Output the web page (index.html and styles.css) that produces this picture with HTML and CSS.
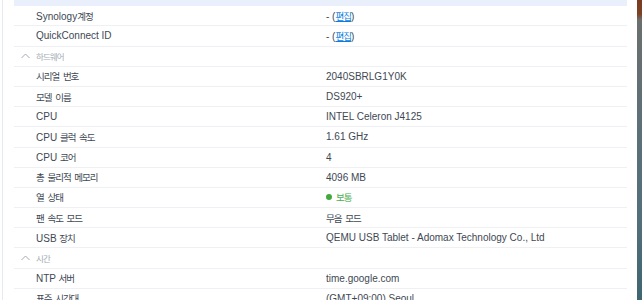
FILE: index.html
```html
<!DOCTYPE html>
<html lang="ko">
<head>
    <meta charset="UTF-8">
    <meta name="viewport" content="width=device-width, initial-scale=1.0">
    <title>정보 센터</title>
    <link rel="stylesheet" href="styles.css">
</head>
<body>
    <div class="screen">
        <div class="window">
            <div class="panel">
                <div class="info-list">
                    <div class="row selected">
                        <div class="label"></div>
                        <div class="value"></div>
                    </div>
                    <div class="row">
                        <div class="label">Synology<span class="ko">계정</span></div>
                        <div class="value">- (<a href="#" class="ko">편집</a>)</div>
                    </div>
                    <div class="row">
                        <div class="label">QuickConnect ID</div>
                        <div class="value">- (<a href="#" class="ko">편집</a>)</div>
                    </div>

                    <div class="row section">
                        <svg class="chevron" width="9" height="6" viewBox="0 0 9 6"><polyline points="0.5,5 4.5,1 8.5,5" fill="none" stroke="#a3abb3" stroke-width="1"/></svg>
                        <span class="ko">하드웨어</span>
                    </div>
                    <div class="row">
                        <div class="label ko">시리얼 번호</div>
                        <div class="value">2040SBRLG1Y0K</div>
                    </div>
                    <div class="row">
                        <div class="label ko">모델 이름</div>
                        <div class="value">DS920+</div>
                    </div>
                    <div class="row">
                        <div class="label">CPU</div>
                        <div class="value">INTEL Celeron J4125</div>
                    </div>
                    <div class="row">
                        <div class="label">CPU <span class="ko">클럭 속도</span></div>
                        <div class="value">1.61 GHz</div>
                    </div>
                    <div class="row">
                        <div class="label">CPU <span class="ko">코어</span></div>
                        <div class="value">4</div>
                    </div>
                    <div class="row">
                        <div class="label ko">총 물리적 메모리</div>
                        <div class="value">4096 MB</div>
                    </div>
                    <div class="row">
                        <div class="label ko">열 상태</div>
                        <div class="value status-ok"><span class="dot"></span><span class="ko">보통</span></div>
                    </div>
                    <div class="row">
                        <div class="label ko">팬 속도 모드</div>
                        <div class="value ko">무음 모드</div>
                    </div>
                    <div class="row">
                        <div class="label">USB <span class="ko">장치</span></div>
                        <div class="value">QEMU USB Tablet - Adomax Technology Co., Ltd</div>
                    </div>

                    <div class="row section">
                        <svg class="chevron" width="9" height="6" viewBox="0 0 9 6"><polyline points="0.5,5 4.5,1 8.5,5" fill="none" stroke="#a3abb3" stroke-width="1"/></svg>
                        <span class="ko">시간</span>
                    </div>
                    <div class="row">
                        <div class="label">NTP <span class="ko">서버</span></div>
                        <div class="value">time.google.com</div>
                    </div>
                    <div class="row">
                        <div class="label ko">표준 시간대</div>
                        <div class="value">(GMT+09:00) Seoul</div>
                    </div>
                </div>
            </div>
        </div>
        <div class="desktop"></div>
    </div>
</body>
</html>
```

FILE: styles.css
```css
body {
    margin: 0;
    padding: 0;
    font-family: 'Liberation Sans', 'Noto Sans CJK KR', sans-serif;
    font-size: 10px;
    color: #3e4853;
    background-color: #ffffff;
    overflow: hidden;
}
.ko {
    font-family: 'Noto Sans CJK KR', sans-serif;
    font-size: 9.5px;
    letter-spacing: -1px;
    word-spacing: 2px;
}
.screen {
    display: flex;
    height: 300px;
}
.window {
    width: 637px;
    flex-shrink: 0;
    background-color: #ffffff;
    padding-left: 2px;
    box-sizing: border-box;
}
.panel {
    height: 100%;
    border-left: 1px solid #e6e9ed;
    padding: 0 10px 0 11px;
    overflow: hidden;
}
.info-list {
    margin-top: -14px;
}
.row {
    display: grid;
    grid-template-columns: 290px 1fr;
    align-items: center;
    height: 20.2px;
    box-sizing: border-box;
    padding-left: 22px;
    border-bottom: 1px solid #eef0f3;
    white-space: nowrap;
}
.row.selected {
    background-color: #e9f0fb;
    border-bottom-color: #e9f0fb;
}
.row.section {
    display: flex;
    padding-left: 7px;
    color: #a3abb3;
}
.row.section .ko {
    font-size: 8.5px;
    letter-spacing: -0.9px;
}
.chevron {
    margin-right: 6px;
    margin-top: -1px;
}
.value a {
    color: #0a7ee0;
    text-decoration: underline;
}
.status-ok {
    color: #4caf50;
    display: flex;
    align-items: center;
}
.dot {
    width: 6px;
    height: 6px;
    border-radius: 50%;
    background-color: #43a93f;
    margin-right: 4px;
}
.desktop {
    flex: 1;
    background: linear-gradient(180deg, #7b3a1f 0px, #7d4226 14px, #6b6f6e 20px, #5e7078 120px, #52707a 220px, #3f6670 300px);
}
```
